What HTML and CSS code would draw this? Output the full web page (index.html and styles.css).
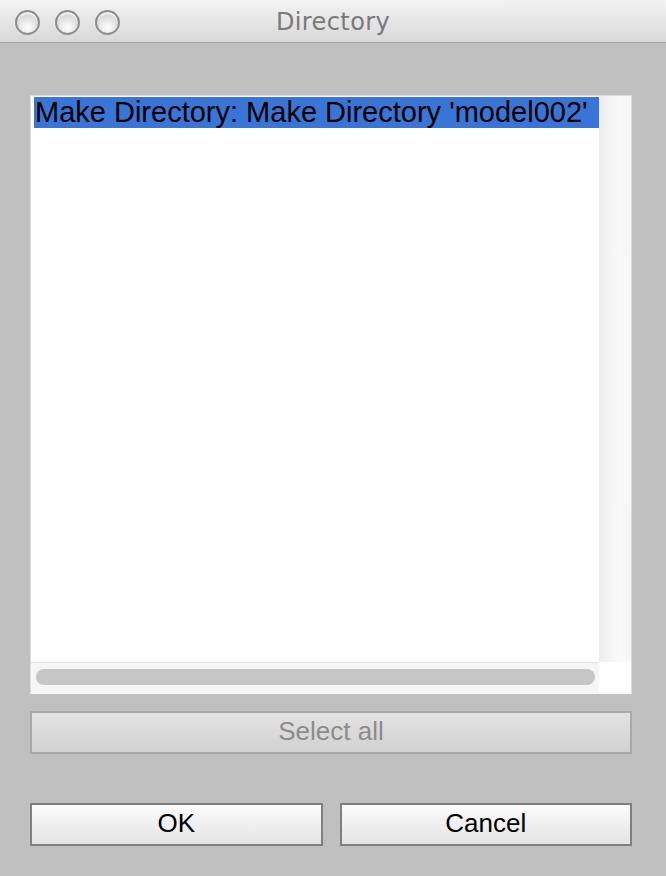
FILE: index.html
```html
<!DOCTYPE html>
<html>
<head>
<meta charset="utf-8">
<title>Directory</title>
<link rel="stylesheet" href="styles.css">
</head>
<body>
<div class="window">
  <div class="titlebar">
    <div class="lights">
      <span class="light"></span>
      <span class="light"></span>
      <span class="light"></span>
    </div>
    <div class="title">Directory</div>
  </div>
  <div class="content">
    <div class="listbox">
      <div class="list">
        <div class="row selected">Make Directory: Make Directory 'model002'</div>
      </div>
      <div class="vtrack"></div>
      <div class="htrack"><div class="thumb"></div></div>
      <div class="corner"></div>
    </div>
    <div class="btn disabled">Select all</div>
    <div class="actions">
      <div class="btn primary">OK</div>
      <div class="btn primary">Cancel</div>
    </div>
  </div>
</div>
</body>
</html>
```
FILE: styles.css
```css
html, body {
  margin: 0;
  padding: 0;
  background: #c0c0c0;
  font-family: "Liberation Sans", Arial, sans-serif;
}
.window {
  width: 666px;
  height: 876px;
  display: flex;
  flex-direction: column;
}
.titlebar {
  height: 42px;
  border-bottom: 1px solid #a4a4a4;
  background: linear-gradient(#f3f3f3, #d9d9d9);
  position: relative;
  display: flex;
  align-items: center;
  justify-content: center;
}
.lights {
  position: absolute;
  left: 15px;
  top: 10px;
  display: flex;
  gap: 15px;
}
.light {
  width: 21px;
  height: 21px;
  border-radius: 50%;
  border: 2px solid #8e8e8e;
  background: radial-gradient(circle at 50% 75%, #ffffff 0%, #e6e6e6 45%, #c4c4c4 100%);
  box-shadow: inset 0 3px 2px -1px rgba(255,255,255,0.9);
}
.title {
  font-family: "DejaVu Sans", sans-serif;
  font-size: 24px;
  letter-spacing: 0.4px;
  color: #7a7a7a;
  padding-top: 2px;
}
.content {
  padding: 52px 34px 0 30px;
  display: flex;
  flex-direction: column;
}
.listbox {
  height: 596px;
  background: #ffffff;
  border: 1px solid #dadada;
  border-bottom: 2px solid #f8f8f8;
  display: grid;
  grid-template-columns: 1fr 32px;
  grid-template-rows: 1fr 30px;
}
.list {
  padding: 1px 0 0 3px;
}
.row {
  height: 31px;
  line-height: 30px;
  font-size: 29px;
  color: #000;
  white-space: nowrap;
  padding-left: 1px;
}
.selected {
  background: #3875d7;
}
.vtrack {
  background: linear-gradient(to right, #ececec, #fafafa 60%, #f6f6f6);
}
.htrack {
  background: #f6f6f6;
  border-top: 1px solid #e2e2e2;
  padding: 6px 4px 0 5px;
}
.thumb {
  height: 16px;
  border-radius: 8px;
  background: #c6c6c6;
}
.corner {
  background: #ffffff;
}
.btn {
  height: 35px;
  padding-bottom: 4px;
  display: flex;
  align-items: center;
  justify-content: center;
  font-size: 26px;
  line-height: 1;
}
.disabled {
  margin-top: 17px;
  border: 2px solid #a9a9a9;
  background: linear-gradient(#e2e2e2, #d2d2d2);
  color: #8c8c8c;
}
.actions {
  margin-top: 49px;
  display: flex;
  gap: 17px;
}
.primary {
  flex: 1;
  border: 2px solid #808080;
  background: linear-gradient(#fbfbfb, #e4e4e4);
  color: #000;
}
```
